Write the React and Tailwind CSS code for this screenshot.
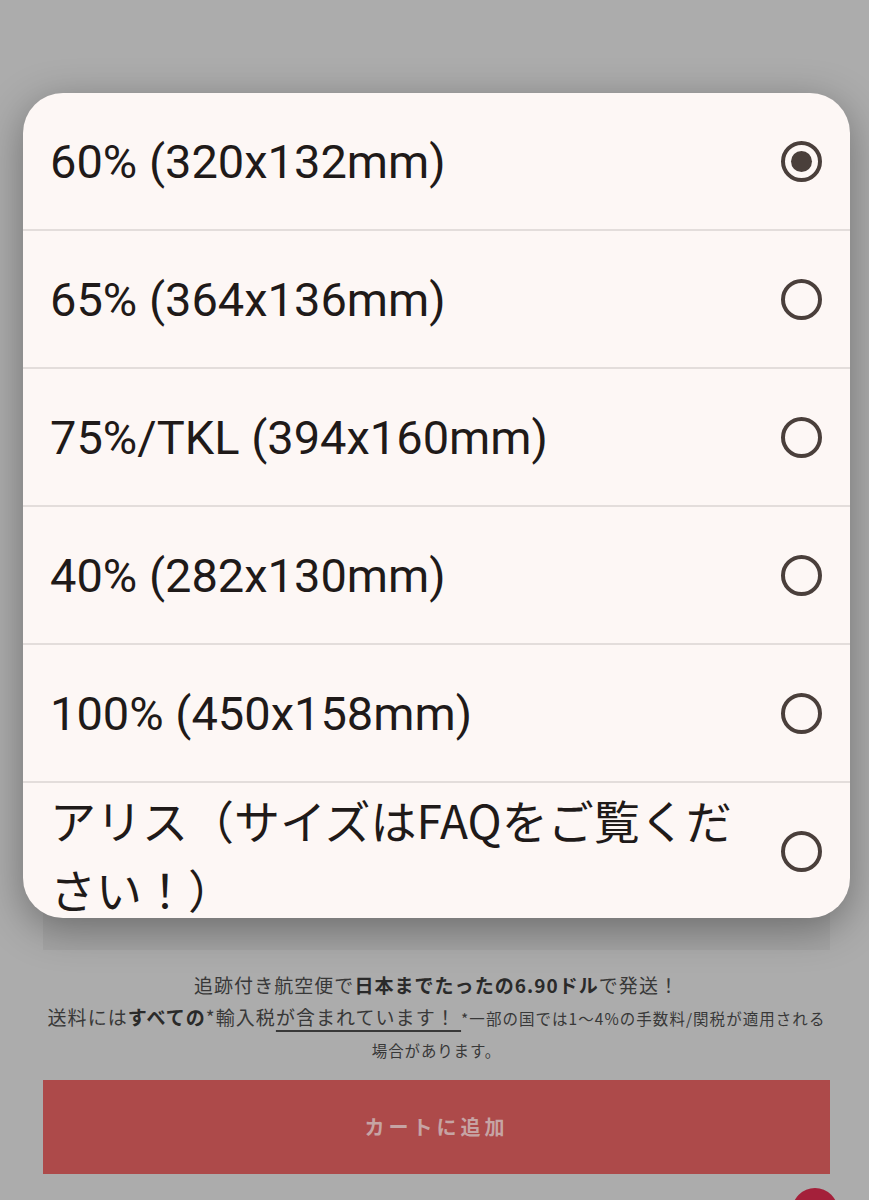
import React from "react";

const options = [
  { label: "60% (320x132mm)", selected: true },
  { label: "65% (364x136mm)" },
  { label: "75%/TKL (394x160mm)" },
  { label: "40% (282x130mm)" },
  { label: "100% (450x158mm)" },
];

function Radio({ selected }) {
  return (
    <div className="w-[41px] h-[41px] shrink-0 rounded-full border-[4px] border-[#4a3f3b] flex items-center justify-center">
      {selected && <div className="w-[21px] h-[21px] rounded-full bg-[#4a3f3b]" />}
    </div>
  );
}

export default function App() {
  return (
    <div
      className="relative w-[869px] h-[1200px] overflow-hidden bg-[#acacac]"
      style={{ fontFamily: '"Noto Sans CJK JP", "Noto Sans", sans-serif' }}
    >
      {/* dimmed page content */}
      <div className="flex flex-col pl-[43px] pr-[39px] pt-[860px]">
        <div className="h-[90px] bg-[#a4a4a4]" />
        <div className="mt-[19px] flex flex-col items-center text-center text-[#383838] leading-[32px]">
          <p className="text-[19px] tracking-[0.055em]">
            追跡付き航空便で<b className="font-bold text-[#2a2a2a]">日本までたったの6.90ドル</b>で発送！
          </p>
          <p className="text-[19px] tracking-[0.055em] whitespace-nowrap">
            送料には<b className="font-bold text-[#2a2a2a]">すべての</b>*輸入税
            <span className="underline underline-offset-[5px] decoration-[1.5px]">が含まれています！ </span>
            <span className="text-[15.5px]">*一部の国では1〜4%の手数料/関税が適用される</span>
          </p>
          <p className="text-[15.5px] tracking-[0.055em]">場合があります。</p>
        </div>
        <div className="mt-[14px] h-[94px] bg-[#ad4a4a] flex items-center justify-center">
          <span className="text-[20px] font-bold tracking-[4px] text-[#c6a4a4]">カートに追加</span>
        </div>
      </div>

      {/* floating button peeking at bottom */}
      <div className="absolute left-[792px] top-[1188px] w-[46px] h-[46px] rounded-full bg-[#a4203a]" />

      {/* dialog */}
      <div
        className="absolute left-[23px] top-[93px] w-[827px] h-[825px] rounded-[40px] overflow-hidden bg-[#fdf7f5] shadow-[0_10px_40px_rgba(0,0,0,0.35)] flex flex-col"
        style={{ fontFamily: 'Roboto, "Noto Sans CJK JP", sans-serif' }}
      >
        {options.map((o) => (
          <React.Fragment key={o.label}>
            <div className="h-[136px] shrink-0 flex items-center justify-between pl-[27px] pr-[28px]">
              <span className="text-[47px] text-[#1f1a19] leading-none">{o.label}</span>
              <Radio selected={o.selected} />
            </div>
            <div className="h-[2px] shrink-0 bg-[#e3dddb]" />
          </React.Fragment>
        ))}
        <div className="h-[136px] shrink-0 flex items-center justify-between gap-[24px] pl-[27px] pr-[28px]">
          <span
            className="flex-1 text-[46px] leading-[69px] text-[#1f1a19] pt-[6px]"
            style={{ fontFamily: '"Noto Sans CJK JP", Roboto, sans-serif' }}
          >
            アリス（サイズはFAQをご覧ください！）
          </span>
          <Radio />
        </div>
      </div>
    </div>
  );
}
